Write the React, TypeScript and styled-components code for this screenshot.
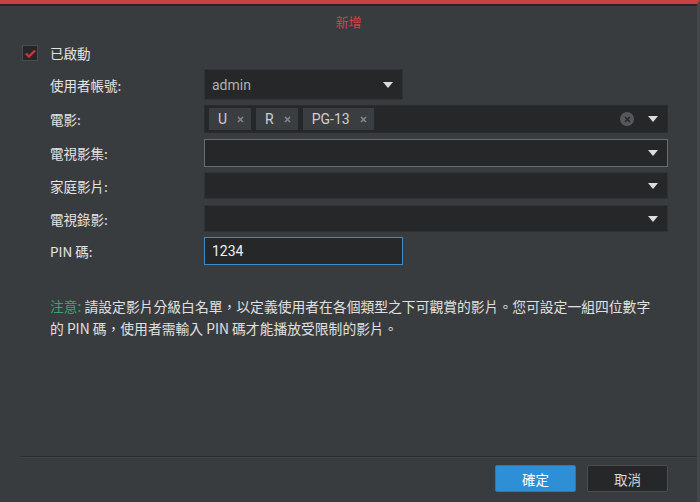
import React from 'react';
import styled, { createGlobalStyle } from 'styled-components';

const GlobalStyle = createGlobalStyle`
  html, body {
    margin: 0;
    padding: 0;
    background: #393c3f;
  }
  * { box-sizing: border-box; }
`;

const Dialog = styled.div`
  width: 700px;
  height: 502px;
  background: #393c3f;
  border-top: 4px solid #c94141;
  border-right: 3px solid #45484b;
  display: flex;
  flex-direction: column;
  font-family: "Noto Sans CJK TC", "Noto Sans", sans-serif;
  font-size: 13px;
  color: #e2e2e2;
`;

const HeaderLine = styled.div`
  height: 2px;
  background: #2c2326;
`;

const Title = styled.div`
  height: 30px;
  display: flex;
  align-items: center;
  justify-content: center;
  color: #d84040;
  font-size: 13px;
`;

const Body = styled.div`
  flex: 1;
  padding: 9px 0 0 22px;
  display: flex;
  flex-direction: column;
`;

const CheckRow = styled.label`
  display: flex;
  align-items: center;
  gap: 12px;
  height: 16px;
  font-size: 13.5px;
`;

const CheckBox = styled.span`
  width: 16px;
  height: 16px;
  background: #262729;
  border: 1px solid #4a4d50;
  display: flex;
  align-items: center;
  justify-content: center;
`;

const Form = styled.div`
  display: grid;
  grid-template-columns: 154px 1fr;
  align-items: center;
  padding-left: 28px;
  padding-right: 29px;
  margin-top: 8px;
`;

const Label = styled.div<{ $h: number; $mb: number }>`
  height: ${(p) => p.$h}px;
  margin-bottom: ${(p) => p.$mb}px;
  display: flex;
  align-items: center;
  color: #e4e4e4;
  font-size: 13.5px;
`;

const Field = styled.div<{ $h: number; $mb: number; $w?: number; $border?: string; $pl?: number }>`
  height: ${(p) => p.$h}px;
  margin-bottom: ${(p) => p.$mb}px;
  width: ${(p) => (p.$w ? `${p.$w}px` : 'auto')};
  background: #262729;
  border: 1px solid ${(p) => p.$border || '#303235'};
  display: flex;
  align-items: center;
  padding: 0 9px 0 ${(p) => p.$pl ?? 6}px;
  gap: 5px;
`;

const Value = styled.span<{ $color?: string }>`
  flex: 1;
  color: ${(p) => p.$color || '#b0b0b0'};
  font-family: Roboto, "Noto Sans", sans-serif;
  font-size: 14px;
  padding-left: 1px;
`;

const Tag = styled.span`
  height: 22px;
  background: #3b3e41;
  display: flex;
  align-items: center;
  gap: 10px;
  padding: 0 7px 0 9px;
  font-family: Roboto, "Noto Sans", sans-serif;
  font-size: 14px;
  color: #cfcfcf;
`;

const Spacer = styled.span`
  flex: 1;
`;

const Clear = styled.span`
  width: 14px;
  height: 14px;
  border-radius: 50%;
  background: #55575a;
  display: flex;
  align-items: center;
  justify-content: center;
  margin-right: 9px;
`;

const Note = styled.p`
  margin: 30px 0 0 28px;
  width: 610px;
  line-height: 22px;
  color: #e0e0e0;
  font-size: 13.8px;
`;

const NoteHead = styled.span`
  color: #3aa46a;
`;

const Footer = styled.div`
  margin-left: 20px;
  border-top: 1px solid #2a2c2e;
  box-shadow: inset 0 1px 0 #414447;
  height: 46px;
  display: flex;
  justify-content: flex-end;
  align-items: flex-start;
  padding: 8px 29px 0 0;
  gap: 11px;
`;

const Button = styled.button<{ $primary?: boolean }>`
  width: 81px;
  height: 27px;
  font-family: "Noto Sans CJK TC", sans-serif;
  font-size: 13.5px;
  border-radius: 2px;
  border: 1px solid ${(p) => (p.$primary ? '#2a78b5' : '#4a4c4f')};
  background: ${(p) => (p.$primary ? '#2f8fd6' : '#262729')};
  color: ${(p) => (p.$primary ? '#ffffff' : '#d8d8d8')};
  cursor: pointer;
`;

const Caret = () => (
  <svg width="10" height="6" viewBox="0 0 10 6">
    <path d="M0 0 L10 0 L5 6 Z" fill="#dcdcdc" />
  </svg>
);

const Check = () => (
  <svg width="11" height="9" viewBox="0 0 11 9">
    <path d="M1 4.5 L4 7.5 L10 1.5" stroke="#cf3535" strokeWidth="2.4" fill="none" />
  </svg>
);

const XMark = ({ color, size }: { color: string; size: number }) => (
  <svg width={size} height={size} viewBox="0 0 7 7">
    <path d="M1 1 L6 6 M6 1 L1 6" stroke={color} strokeWidth="1.6" />
  </svg>
);

const ratings = ['U', 'R', 'PG-13'];

const App: React.FC = () => {
  return (
    <>
      <GlobalStyle />
      <Dialog>
        <HeaderLine />
        <Title>新增</Title>
        <Body>
          <CheckRow>
            <CheckBox>
              <Check />
            </CheckBox>
            已啟動
          </CheckRow>
          <Form>
            <Label $h={31} $mb={5}>使用者帳號:</Label>
            <Field $h={31} $mb={5} $w={199}>
              <Value>admin</Value>
              <Caret />
            </Field>

            <Label $h={28} $mb={6}>電影:</Label>
            <Field $h={28} $mb={6} $border="#2a2c2e" $pl={4}>
              {ratings.map((r) => (
                <Tag key={r}>
                  {r}
                  <XMark color="#85878a" size={7} />
                </Tag>
              ))}
              <Spacer />
              <Clear>
                <XMark color="#262729" size={7} />
              </Clear>
              <Caret />
            </Field>

            <Label $h={28} $mb={5}>電視影集:</Label>
            <Field $h={28} $mb={5} $border="#6a6d70">
              <Spacer />
              <Caret />
            </Field>

            <Label $h={27} $mb={6}>家庭影片:</Label>
            <Field $h={27} $mb={6}>
              <Spacer />
              <Caret />
            </Field>

            <Label $h={27} $mb={5}>電視錄影:</Label>
            <Field $h={27} $mb={5}>
              <Spacer />
              <Caret />
            </Field>

            <Label $h={28} $mb={0}>PIN 碼:</Label>
            <Field $h={28} $mb={0} $w={199} $border="#3b8ccc">
              <Value $color="#f0f0f0">1234</Value>
            </Field>
          </Form>
          <Note>
            <NoteHead>注意:</NoteHead> 請設定影片分級白名單，以定義使用者在各個類型之下可觀賞的影片。您可設定一組四位數字的 PIN 碼，使用者需輸入 PIN 碼才能播放受限制的影片。
          </Note>
          <Spacer />
        </Body>
        <Footer>
          <Button $primary>確定</Button>
          <Button>取消</Button>
        </Footer>
      </Dialog>
    </>
  );
};

export default App;
